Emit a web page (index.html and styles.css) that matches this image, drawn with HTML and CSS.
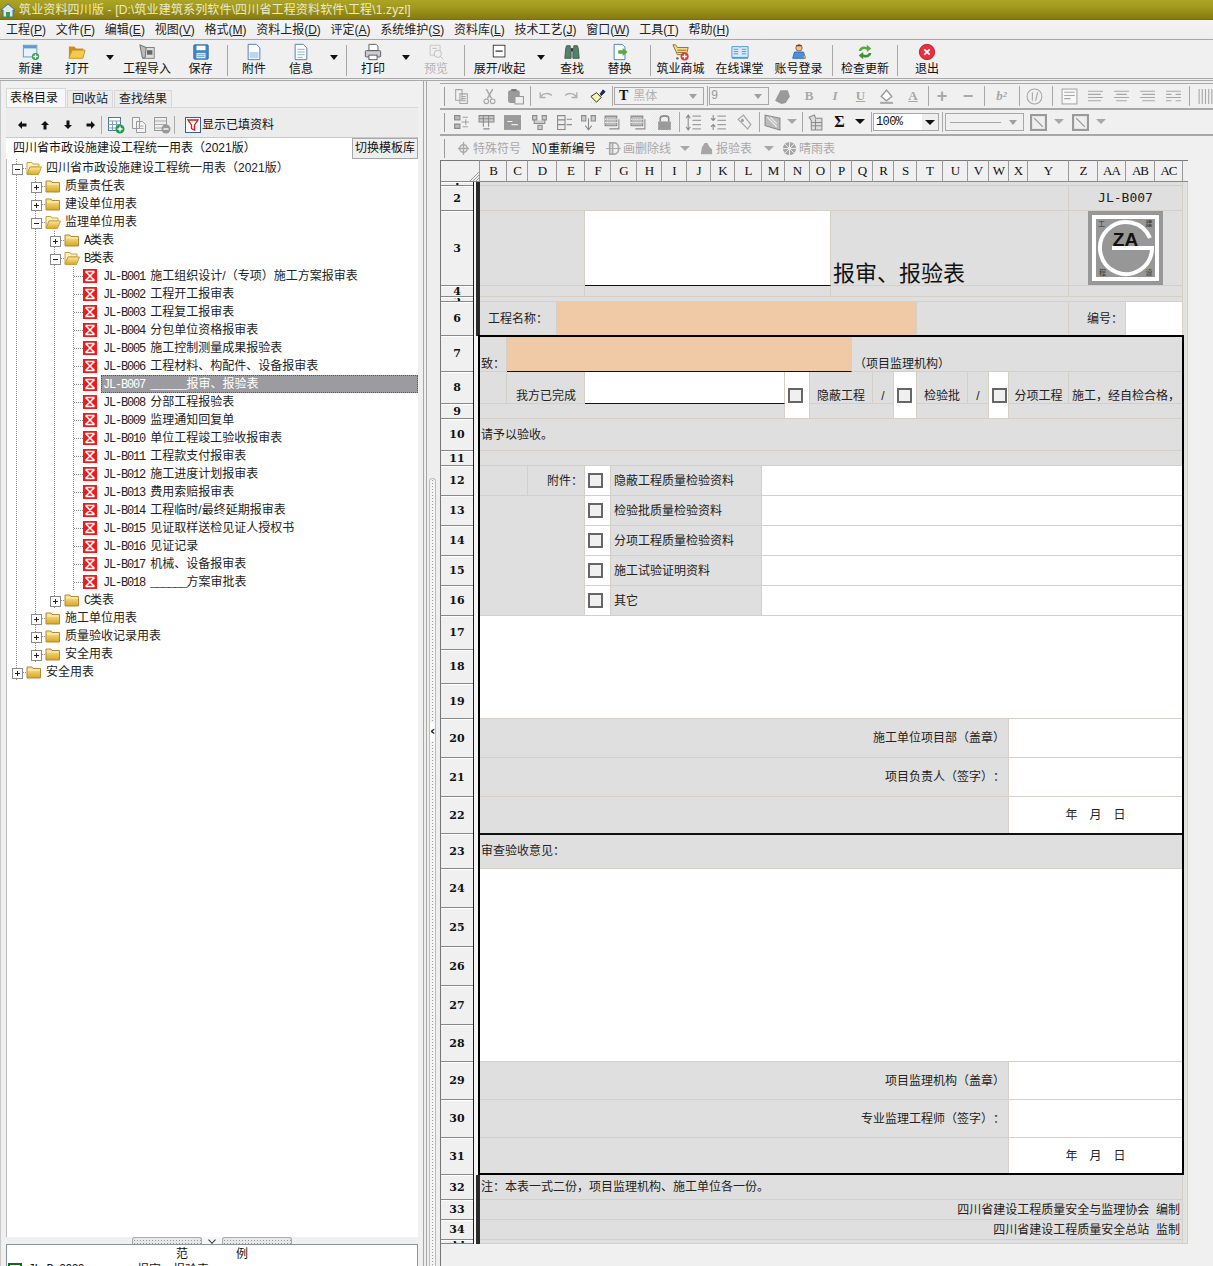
FILE: index.html
```html
<!DOCTYPE html>
<html lang="zh">
<head>
<meta charset="utf-8">
<title>筑业资料四川版</title>
<link rel="stylesheet" href="styles.css">
</head>
<body>
<svg class="defs" width="0" height="0">
<defs>
<linearGradient id="fy" x1="0" y1="0" x2="0" y2="1"><stop offset="0" stop-color="#fde9a0"/><stop offset="1" stop-color="#d9a520"/></linearGradient>
<symbol id="new" viewBox="0 0 20 20"><rect x="1.5" y="2.5" width="15" height="13" fill="#eaf3fb" stroke="#5b8fc7"/><rect x="2" y="3" width="14" height="3" fill="#5b9bd5"/><circle cx="15" cy="15" r="4" fill="#2f9e4f"/><path d="M15 12.5v5M12.5 15h5" stroke="#fff" stroke-width="1.4"/></symbol>
<symbol id="open" viewBox="0 0 20 20"><path d="M1 4h6l2 2h8v2H5L2 16H1z" fill="#c98f1e"/><path d="M4.5 8H19l-2.500 9H1z" fill="#f7c948" stroke="#c98f1e"/></symbol>
<symbol id="imp" viewBox="0 0 20 20"><rect x="6" y="5" width="12" height="12" fill="#ddd" stroke="#777"/><path d="M2 2l7 3-1 11-3 1z" fill="#bbb" stroke="#666"/><path d="M10 8h6v5h-6z" fill="#666"/></symbol>
<symbol id="save" viewBox="0 0 20 20"><rect x="2" y="2" width="16" height="16" rx="1" fill="#3f88c9" stroke="#2a6aa5"/><rect x="5" y="3" width="10" height="5" fill="#fff"/><rect x="5" y="11" width="10" height="6" fill="#d8ecf9"/><path d="M6 13h8M6 15h8" stroke="#6fa6d4"/></symbol>
<symbol id="att" viewBox="0 0 20 20"><path d="M3.500 1.500h9l4 4v13h-13z" fill="#fff" stroke="#3f78b8"/><path d="M5 10h10v7H5z" fill="#bcd6ef"/></symbol>
<symbol id="info" viewBox="0 0 20 20"><path d="M3.500 1.500h9l4 4v13h-13z" fill="#fff" stroke="#3f78b8"/><path d="M6 7h8M6 10h8M6 13h8M6 16h6" stroke="#7fa7d2"/></symbol>
<symbol id="print" viewBox="0 0 20 20"><path d="M5.500 1.500h8l2 2v5h-10z" fill="#fff" stroke="#555"/><rect x="1.500" y="8.500" width="17" height="7" rx="1" fill="#c9ccd2" stroke="#555"/><rect x="5.500" y="13.500" width="9" height="5" fill="#fff" stroke="#555"/></symbol>
<symbol id="prev" viewBox="0 0 20 20"><path d="M3.500 2.500h11v11h-11z" fill="none" stroke="#c4c4c4"/><circle cx="12" cy="12" r="4" fill="#f0f0f0" stroke="#bbb"/><path d="M15 15l3 3M6 6h5" stroke="#bbb"/></symbol>
<symbol id="fold" viewBox="0 0 20 20"><rect x="2.500" y="2.500" width="13" height="13" fill="#fff" stroke="#333"/><path d="M5 9h8" stroke="#222" stroke-width="1.300"/></symbol>
<symbol id="find" viewBox="0 0 20 20"><path d="M3 6l1-3h4v3h4V3h4l1 3 1 11h-7V9H9v8H2z" fill="#56806a" stroke="#3e5f4e"/><path d="M9 6h2v3H9z" fill="#333"/></symbol>
<symbol id="repl" viewBox="0 0 20 20"><path d="M3.500 1.500h9l3 3v14h-12z" fill="#fff" stroke="#3f78b8"/><path d="M8 8h5V5.500L18.500 10 13 14.500V12H8z" fill="#56a84a"/></symbol>
<symbol id="shop" viewBox="0 0 20 20"><path d="M1 2h3l2 3h12l-2 8H6z" fill="#f6d98a" stroke="#8a6a2a"/><path d="M6 8h10M6 10.500h9" stroke="#8a6a2a"/><circle cx="14" cy="15" r="4.500" fill="#e23b3b"/><path d="M14 12.500v5M11.500 15h5" stroke="#fff" stroke-width="1.400"/><circle cx="6" cy="17" r="1.300" fill="#555"/></symbol>
<symbol id="book" viewBox="0 0 20 20"><path d="M1 4h8.500l.5 1 .5-1H19v12H1z" fill="#d9ecfb" stroke="#4a90d0"/><path d="M3 7h5M3 9.500h5M3 12h5M12 7h5M12 9.500h5M12 12h5" stroke="#4a90d0"/><rect x="1" y="16" width="18" height="1.500" fill="#4a90d0"/></symbol>
<symbol id="user" viewBox="0 0 20 20"><circle cx="10" cy="5.500" r="3.500" fill="#f0c090" stroke="#8a5a30"/><path d="M6.500 3.500c1-2 6-2 7 0z" fill="#6a3d1d"/><path d="M5 10h10l2 7H3z" fill="#4a90e0" stroke="#2f6bb0"/><circle cx="16.500" cy="15.500" r="1.500" fill="#e8a04a"/></symbol>
<symbol id="upd" viewBox="0 0 20 20"><path d="M3 9c.5-4 5-6.500 9-4.500V2l5 4-5 4V7.500C9 6 6.500 7 6 9z" fill="#58a83e"/><path d="M17 11c-.5 4-5 6.500-9 4.500V18l-5-4 5-4v2.500c3 1.500 5.500.5 6-1.500z" fill="#3f8f2e"/></symbol>
<symbol id="exit" viewBox="0 0 20 20"><circle cx="10" cy="10" r="8.500" fill="#e8303f" stroke="#b02030"/><path d="M7 7l6 6M13 7l-6 6" stroke="#fff" stroke-width="2"/></symbol>
<symbol id="folder" viewBox="0 0 16 16"><path d="M1 3h5l1 1.500h7.500V14H1z" fill="url(#fy)" stroke="#b08a3a"/><path d="M2 6h12" stroke="#fff3c0"/></symbol>
<symbol id="folderopen" viewBox="0 0 16 16"><path d="M1 2.500h5l1 1.500h6v3H4l-3 7z" fill="#fdf2c0" stroke="#c9a040"/><path d="M4 7h11.500L12.500 14.500H1z" fill="url(#fy)" stroke="#c9a040"/></symbol>
<symbol id="form" viewBox="0 0 14 14"><rect width="14" height="14" fill="#f01a1a"/><path d="M2.500 2.500h9M2.500 2.500l9 9M11.500 2.500l-9 9M2.500 11.500h9" stroke="#fff" stroke-width="1.600"/></symbol>
<symbol id="addrow" viewBox="0 0 18 18"><rect x="1.500" y="1.500" width="12" height="13" fill="#fff" stroke="#4a7a9a"/><path d="M1.500 5h12M1.500 8.500h12M1.500 12h12M5.500 5v9.500M9.500 5v9.500" stroke="#7fa2ba"/><circle cx="13" cy="13" r="4.500" fill="#249a4a"/><path d="M13 10.500v5M10.500 13h5" stroke="#fff" stroke-width="1.400"/></symbol>
<symbol id="copyrow" viewBox="0 0 18 18"><path d="M2.500 1.500h7v11h-7zM6.500 5.500h6l3 3v8h-9z" fill="#f4f4f4" stroke="#999"/><path d="M8.500 10h5M8.500 12.500h5" stroke="#aaa"/></symbol>
<symbol id="delrow" viewBox="0 0 18 18"><rect x="1.500" y="1.500" width="12" height="13" fill="#eee" stroke="#999"/><path d="M1.500 5h12M1.500 8.500h12M1.500 12h12" stroke="#aaa"/><circle cx="13" cy="13" r="4.500" fill="#999"/><path d="M10.500 13h5" stroke="#fff" stroke-width="1.400"/></symbol>
<symbol id="filter" viewBox="0 0 16 16"><rect x=".5" y=".5" width="15" height="15" fill="#fff" stroke="#3a5f9a"/><path d="M3 3h10L9.500 8v5l-3-1.500V8z" fill="#fff" stroke="#e01515" stroke-width="1.300"/></symbol>
<symbol id="al" viewBox="0 0 10 10"><path d="M1 5l4-4v2.500h4.500v3H5V9z" fill="#111"/></symbol>
<symbol id="ar" viewBox="0 0 10 10"><path d="M9 5L5 1v2.500H.5v3H5V9z" fill="#111"/></symbol>
<symbol id="au" viewBox="0 0 10 10"><path d="M5 1L1 5h2.500v4.500h3V5H9z" fill="#111"/></symbol>
<symbol id="ad" viewBox="0 0 10 10"><path d="M5 9L1 5h2.500V.5h3V5H9z" fill="#111"/></symbol>
<symbol id="copy" viewBox="0 0 16 16"><path d="M2.500 1.500h6v10h-6zM6.500 5.500h7v9h-7z" fill="#f0f0f0" stroke="#a6a6a6"/><path d="M8 8h4M8 10h4M8 12h4" stroke="#a6a6a6"/></symbol>
<symbol id="cut" viewBox="0 0 16 16"><path d="M5 1l5 9M11 1l-5 9" stroke="#a6a6a6" stroke-width="1.300" fill="none"/><circle cx="5" cy="12.500" r="2.200" fill="none" stroke="#a6a6a6"/><circle cx="11" cy="12.500" r="2.200" fill="none" stroke="#a6a6a6"/></symbol>
<symbol id="paste" viewBox="0 0 16 16"><rect x="1" y="2" width="11" height="12" rx="2" fill="#9a9a9a"/><rect x="4" y="1" width="5" height="2" fill="#777"/><rect x="7.500" y="8" width="8" height="7" fill="#f0f0f0" stroke="#999"/></symbol>
<symbol id="undo" viewBox="0 0 16 16"><path d="M4 8c1-3 7-4 10-1M3 4v5h5" fill="none" stroke="#b0b0b0" stroke-width="1.300"/></symbol>
<symbol id="redo" viewBox="0 0 16 16"><path d="M12 8c-1-3-7-4-10-1M13 4v5H8" fill="none" stroke="#b0b0b0" stroke-width="1.300"/></symbol>
<symbol id="brush" viewBox="0 0 18 18"><path d="M2 9l6-4 5 5-5 5z" fill="#fff7b0" stroke="#222"/><path d="M12 6l3-4 2 2-4 4z" fill="#1f2f80" stroke="#111"/><path d="M2 15h1M5 16h1" stroke="#e6d800"/></symbol>
<symbol id="g1" viewBox="0 0 16 16"><path d="M1.500 1.500h5v4h-5zM1.500 9.500h5v4h-5z" fill="#bbb" stroke="#8a8a8a"/><path d="M8 7.500h7M12 5v5M9 3h5M9 12h5" stroke="#a0a0a0"/></symbol>
<symbol id="g2" viewBox="0 0 16 16"><path d="M1 1.500h14v6H1z" fill="#ccc" stroke="#8a8a8a"/><path d="M5 1v11M10 1v11M1 4.500h14M5 14h6" stroke="#8a8a8a"/></symbol>
<symbol id="g3" viewBox="0 0 16 16"><rect x="0" y="1" width="16" height="14" fill="#9a9a9a"/><path d="M3 7h5M7 10h6" stroke="#eee"/></symbol>
<symbol id="g4" viewBox="0 0 16 16"><path d="M1.500 1.500h4v4h-4zM10.500 1.500h4v4h-4zM6.500 10.500h4v4h-4zM3 6v3h10V6" fill="#ccc" stroke="#8a8a8a"/></symbol>
<symbol id="g5" viewBox="0 0 16 16"><path d="M1.500 1.500h7v13h-7z" fill="#eee" stroke="#8a8a8a"/><path d="M1.500 5.500h7M1.500 10h7M10 5h5M10 10h5" stroke="#8a8a8a"/></symbol>
<symbol id="g6" viewBox="0 0 16 16"><path d="M1.500 1.500h4v5h-4zM10.500 1.500h4v5h-4z" fill="#ccc" stroke="#8a8a8a"/><path d="M8 4v11M5 11l3 4 3-4" fill="none" stroke="#8a8a8a"/></symbol>
<symbol id="g7" viewBox="0 0 16 16"><path d="M1 2h11v9H1z" fill="#bbb" stroke="#8a8a8a"/><path d="M1 5h11M1 8h11" stroke="#fff" stroke-dasharray="1 1"/><path d="M14 5v9H5" fill="none" stroke="#8a8a8a"/></symbol>
<symbol id="lock" viewBox="0 0 16 16"><path d="M4 7V4c0-3 8-3 8 0v3" fill="none" stroke="#8a8a8a" stroke-width="1.500"/><rect x="2" y="7" width="12" height="8" fill="#9a9a9a"/></symbol>
<symbol id="ls1" viewBox="0 0 16 16"><path d="M7 2h8M7 6h8M7 10h8M7 14h8" stroke="#a0a0a0"/><path d="M3 1v14M1 4l2-3 2 3M1 12l2 3 2-3" fill="none" stroke="#8a8a8a"/></symbol>
<symbol id="ls2" viewBox="0 0 16 16"><path d="M7 2h8M7 6h8M7 10h8M7 14h8" stroke="#a0a0a0"/><path d="M3 1v5M3 10v5M1 4l2 2 2-2M1 12l2-2 2 2" fill="none" stroke="#8a8a8a"/></symbol>
<symbol id="tag" viewBox="0 0 16 16"><path d="M2 5l5-4 7 9-3 4z" fill="none" stroke="#a0a0a0"/><circle cx="6" cy="6" r="1.500" fill="#a0a0a0"/></symbol>
<symbol id="chk" viewBox="0 0 16 16"><path d="M1 1v10l14 4V4z" fill="#bbb" stroke="#8a8a8a"/><path d="M3 3l9 9M6 3l6 6" stroke="#eee"/></symbol>
<symbol id="sheet" viewBox="0 0 16 16"><path d="M2 3l5-2 1 3h6v11H4V6z" fill="#ddd" stroke="#8a8a8a"/><path d="M4 8h10M4 11h10M8 5v10" stroke="#8a8a8a"/></symbol>
<symbol id="bord" viewBox="0 0 16 16"><rect x="1" y="1" width="14" height="14" fill="#eee" stroke="#9a9a9a" stroke-width="2"/><path d="M4 4l8 8" stroke="#9a9a9a"/></symbol>
<symbol id="fill" viewBox="0 0 16 16"><path d="M3 8l5-6 5 6-5 4z" fill="#fff" stroke="#999" stroke-width="1.300"/><path d="M2 14h12" stroke="#aaa" stroke-width="2"/></symbol>
<symbol id="blob" viewBox="0 0 16 16"><path d="M1 12l5-10h7l2 6-4 6-4 1z" fill="#9a9a9a"/></symbol>
<symbol id="al1" viewBox="0 0 16 16"><rect x="1" y="1" width="14" height="14" fill="#f8f8f8" stroke="#a6a6a6"/><path d="M3 4h10M3 7h10M3 10h6" stroke="#a6a6a6"/></symbol>
<symbol id="al2" viewBox="0 0 16 16"><path d="M1 3h14M1 6h12M1 9h14M1 12h12" stroke="#a6a6a6"/></symbol>
<symbol id="al3" viewBox="0 0 16 16"><path d="M1 3h14M3 6h10M1 9h14M3 12h10" stroke="#a6a6a6"/></symbol>
<symbol id="al4" viewBox="0 0 16 16"><path d="M1 3h14M3 6h12M1 9h14M3 12h12" stroke="#a6a6a6"/></symbol>
<symbol id="al5" viewBox="0 0 16 16"><path d="M1 3h14M1 6h5M10 6h5M1 9h14M1 12h5M10 12h5" stroke="#a6a6a6"/></symbol>
<symbol id="vs" viewBox="0 0 16 16"><path d="M2 1v14M5 1v14M8 1v14M11 1v14M14 1v14" stroke="#a6a6a6"/></symbol>
<symbol id="frac" viewBox="0 0 16 16"><circle cx="8" cy="8" r="7" fill="none" stroke="#a6a6a6"/><path d="M6 4v8M9 12l2-8" stroke="#a6a6a6"/></symbol>
<symbol id="spec" viewBox="0 0 16 16"><path d="M8 1v14M2 8h12" stroke="#aaa" stroke-width="1.500"/><circle cx="8" cy="8" r="4" fill="none" stroke="#aaa" stroke-width="1.500"/></symbol>
<symbol id="strike" viewBox="0 0 16 16"><path d="M4 2h5c6 0 6 12 0 12H4zM7 2v12" fill="none" stroke="#aaa" stroke-width="1.800"/><path d="M0 8h16" stroke="#aaa"/></symbol>
<symbol id="bao" viewBox="0 0 16 16"><path d="M2 14l1-7 3-5h3l2 4 3 3v5z" fill="#a6a6a6"/></symbol>
<symbol id="wea" viewBox="0 0 16 16"><circle cx="8" cy="8" r="7" fill="#a6a6a6"/><path d="M1 8h14M8 1v14M3 3l10 10M13 3L3 13" stroke="#eee"/></symbol>
</defs>
</svg>
<div class="app">
<header class="titlebar"><svg class="ticon" viewBox="0 0 16 16"><path d="M1 8l7-6 7 6h-2v7H3V8z" fill="#dfe8f2" stroke="#3a6ea5"/><path d="M6 10h4v5H6z" fill="#3a9a4f"/></svg><span>筑业资料四川版 - [D:\筑业建筑系列软件\四川省工程资料软件\工程\1.zyzl]</span></header>
<nav class="menubar">
<span>工程(<u>P</u>)</span><span>文件(<u>F</u>)</span><span>编辑(<u>E</u>)</span><span>视图(<u>V</u>)</span><span>格式(<u>M</u>)</span><span>资料上报(<u>D</u>)</span><span>评定(<u>A</u>)</span><span>系统维护(<u>S</u>)</span><span>资料库(<u>L</u>)</span><span>技术工艺(<u>J</u>)</span><span>窗口(<u>W</u>)</span><span>工具(<u>T</u>)</span><span>帮助(<u>H</u>)</span>
</nav>
<div class="toolbar">
<div class="tb w47"><svg><use href="#new"/></svg><span>新建</span></div>
<div class="tb w46"><svg><use href="#open"/></svg><span>打开</span></div>
<div class="drop w20"></div>
<div class="tb w54"><svg><use href="#imp"/></svg><span>工程导入</span></div>
<div class="tb w53"><svg><use href="#save"/></svg><span>保存</span></div>
<div class="vsep"></div>
<div class="tb w52"><svg><use href="#att"/></svg><span>附件</span></div>
<div class="tb w42"><svg><use href="#info"/></svg><span>信息</span></div>
<div class="drop w24"></div>
<div class="vsep"></div>
<div class="tb w52"><svg><use href="#print"/></svg><span>打印</span></div>
<div class="drop w14"></div>
<div class="tb w46 off"><svg><use href="#prev"/></svg><span>预览</span></div>
<div class="vsep m5"></div>
<div class="tb w69"><svg><use href="#fold"/></svg><span>展开/收起</span></div>
<div class="drop w14"></div>
<div class="tb w48"><svg><use href="#find"/></svg><span>查找</span></div>
<div class="tb w47"><svg><use href="#repl"/></svg><span>替换</span></div>
<div class="vsep m7"></div>
<div class="tb w59"><svg><use href="#shop"/></svg><span>筑业商城</span></div>
<div class="tb w59"><svg><use href="#book"/></svg><span>在线课堂</span></div>
<div class="tb w59"><svg><use href="#user"/></svg><span>账号登录</span></div>
<div class="vsep m4"></div>
<div class="tb w64"><svg><use href="#upd"/></svg><span>检查更新</span></div>
<div class="vsep"></div>
<div class="tb w58"><svg><use href="#exit"/></svg><span>退出</span></div>
</div>
<div class="work">
<aside class="left">
<div class="tabs"><span class="tab on">表格目录</span><span class="tab">回收站</span><span class="tab">查找结果</span></div>
<div class="leftbar">
<span class="arrow"><svg><use href="#al"/></svg></span>
<span class="arrow"><svg><use href="#au"/></svg></span>
<span class="arrow"><svg><use href="#ad"/></svg></span>
<span class="arrow"><svg><use href="#ar"/></svg></span>
<i class="lsep"></i>
<svg class="li"><use href="#addrow"/></svg><svg class="li"><use href="#copyrow"/></svg><svg class="li"><use href="#delrow"/></svg>
<i class="lsep second"></i>
<svg class="lf"><use href="#filter"/></svg><span class="lt">显示已填资料</span>
</div>
<div class="combo"><span class="combotext">四川省市政设施建设工程统一用表（2021版）</span><span class="combobtn">切换模板库</span></div>
<div class="tree">
<div class="row"><i class="b m"></i><svg class="fo"><use href="#folderopen"/></svg><span class="l">四川省市政设施建设工程统一用表（2021版）</span></div>
<div class="row"><i class="g"></i><i class="b p"></i><svg class="fo"><use href="#folder"/></svg><span class="l">质量责任表</span></div>
<div class="row"><i class="g"></i><i class="b p"></i><svg class="fo"><use href="#folder"/></svg><span class="l">建设单位用表</span></div>
<div class="row"><i class="g"></i><i class="b m"></i><svg class="fo"><use href="#folderopen"/></svg><span class="l">监理单位用表</span></div>
<div class="row"><i class="g"></i><i class="g"></i><i class="b p"></i><svg class="fo"><use href="#folder"/></svg><span class="l"><b>A</b>类表</span></div>
<div class="row"><i class="g"></i><i class="g"></i><i class="b m"></i><svg class="fo"><use href="#folderopen"/></svg><span class="l"><b>B</b>类表</span></div>
<div class="row"><i class="g"></i><i class="g"></i><i class="g"></i><i class="e"></i><svg class="fm"><use href="#form"/></svg><span class="l f"><b>JL-B001</b> 施工组织设计/（专项）施工方案报审表</span></div>
<div class="row"><i class="g"></i><i class="g"></i><i class="g"></i><i class="e"></i><svg class="fm"><use href="#form"/></svg><span class="l f"><b>JL-B002</b> 工程开工报审表</span></div>
<div class="row"><i class="g"></i><i class="g"></i><i class="g"></i><i class="e"></i><svg class="fm"><use href="#form"/></svg><span class="l f"><b>JL-B003</b> 工程复工报审表</span></div>
<div class="row"><i class="g"></i><i class="g"></i><i class="g"></i><i class="e"></i><svg class="fm"><use href="#form"/></svg><span class="l f"><b>JL-B004</b> 分包单位资格报审表</span></div>
<div class="row"><i class="g"></i><i class="g"></i><i class="g"></i><i class="e"></i><svg class="fm"><use href="#form"/></svg><span class="l f"><b>JL-B005</b> 施工控制测量成果报验表</span></div>
<div class="row"><i class="g"></i><i class="g"></i><i class="g"></i><i class="e"></i><svg class="fm"><use href="#form"/></svg><span class="l f"><b>JL-B006</b> 工程材料、构配件、设备报审表</span></div>
<div class="row"><i class="g"></i><i class="g"></i><i class="g"></i><i class="e"></i><svg class="fm"><use href="#form"/></svg><span class="l f sel"><b>JL-B007</b> <b class="us">______</b>报审、报验表</span></div>
<div class="row"><i class="g"></i><i class="g"></i><i class="g"></i><i class="e"></i><svg class="fm"><use href="#form"/></svg><span class="l f"><b>JL-B008</b> 分部工程报验表</span></div>
<div class="row"><i class="g"></i><i class="g"></i><i class="g"></i><i class="e"></i><svg class="fm"><use href="#form"/></svg><span class="l f"><b>JL-B009</b> 监理通知回复单</span></div>
<div class="row"><i class="g"></i><i class="g"></i><i class="g"></i><i class="e"></i><svg class="fm"><use href="#form"/></svg><span class="l f"><b>JL-B010</b> 单位工程竣工验收报审表</span></div>
<div class="row"><i class="g"></i><i class="g"></i><i class="g"></i><i class="e"></i><svg class="fm"><use href="#form"/></svg><span class="l f"><b>JL-B011</b> 工程款支付报审表</span></div>
<div class="row"><i class="g"></i><i class="g"></i><i class="g"></i><i class="e"></i><svg class="fm"><use href="#form"/></svg><span class="l f"><b>JL-B012</b> 施工进度计划报审表</span></div>
<div class="row"><i class="g"></i><i class="g"></i><i class="g"></i><i class="e"></i><svg class="fm"><use href="#form"/></svg><span class="l f"><b>JL-B013</b> 费用索赔报审表</span></div>
<div class="row"><i class="g"></i><i class="g"></i><i class="g"></i><i class="e"></i><svg class="fm"><use href="#form"/></svg><span class="l f"><b>JL-B014</b> 工程临时/最终延期报审表</span></div>
<div class="row"><i class="g"></i><i class="g"></i><i class="g"></i><i class="e"></i><svg class="fm"><use href="#form"/></svg><span class="l f"><b>JL-B015</b> 见证取样送检见证人授权书</span></div>
<div class="row"><i class="g"></i><i class="g"></i><i class="g"></i><i class="e"></i><svg class="fm"><use href="#form"/></svg><span class="l f"><b>JL-B016</b> 见证记录</span></div>
<div class="row"><i class="g"></i><i class="g"></i><i class="g"></i><i class="e"></i><svg class="fm"><use href="#form"/></svg><span class="l f"><b>JL-B017</b> 机械、设备报审表</span></div>
<div class="row"><i class="g"></i><i class="g"></i><i class="g"></i><i class="e"></i><svg class="fm"><use href="#form"/></svg><span class="l f"><b>JL-B018</b> <b class="us">______</b>方案审批表</span></div>
<div class="row"><i class="g"></i><i class="g"></i><i class="b p"></i><svg class="fo"><use href="#folder"/></svg><span class="l"><b>C</b>类表</span></div>
<div class="row"><i class="g"></i><i class="b p"></i><svg class="fo"><use href="#folder"/></svg><span class="l">施工单位用表</span></div>
<div class="row"><i class="g"></i><i class="b p"></i><svg class="fo"><use href="#folder"/></svg><span class="l">质量验收记录用表</span></div>
<div class="row"><i class="g"></i><i class="b p"></i><svg class="fo"><use href="#folder"/></svg><span class="l">安全用表</span></div>
<div class="row"><i class="b p"></i><svg class="fo"><use href="#folder"/></svg><span class="l">安全用表</span></div>
</div>
<div class="grip"><i class="dots"></i><i class="chev"></i><i class="dots"></i></div>
<div class="sample">
<div class="samplehead"><span>范</span><span>例</span></div>
<div class="samplerow"><i class="sw"></i><b>JL-B-2023</b><span>报审、报验表</span></div>
</div>
</aside>
<div class="splitter"><div class="handle"><i class="hdots"></i><i class="harrow">‹</i><i class="hdots"></i></div></div>
<main class="right">
<div class="rbar">
<i class="hg"></i>
<span class="t w27"><svg><use href="#copy"/></svg></span><span class="t w28"><svg><use href="#cut"/></svg></span><span class="t w24"><svg><use href="#paste"/></svg></span><i class="rs w5"></i>
<span class="t w26"><svg><use href="#undo"/></svg></span><span class="t w26"><svg><use href="#redo"/></svg></span><span class="t w26"><svg><use href="#brush"/></svg></span><i class="rs w4"></i>
<div class="cb w90"><span class="ttt">T</span><span class="cbt">黑体</span><i class="cba"></i></div><i class="rs w5"></i>
<div class="cb w60"><span class="cbt cbn">9</span><i class="cba"></i></div>
<span class="t w27"><svg><use href="#blob"/></svg></span><span class="t w26 gb">B</span><span class="t w26 gb gi">I</span><span class="t w25 gb gu">U</span><span class="t w27"><svg><use href="#fill"/></svg></span><span class="t w26 gb gu">A</span><i class="rs w3"></i>
<span class="t w26 gp">+</span><span class="t w26 gp">−</span><i class="rs w6"></i>
<span class="t w29 gb gi">b²</span><i class="rs w5"></i>
<span class="t w26"><svg><use href="#frac"/></svg></span><i class="rs w9"></i>
<span class="t w26"><svg><use href="#al1"/></svg></span><span class="t w26"><svg><use href="#al2"/></svg></span><span class="t w26"><svg><use href="#al3"/></svg></span><span class="t w26"><svg><use href="#al4"/></svg></span><span class="t w26"><svg><use href="#al5"/></svg></span><i class="rs w6"></i>
<span class="t w26"><svg><use href="#vs"/></svg></span>
</div>
<div class="rbar">
<i class="hg"></i>
<span class="t w26"><svg><use href="#g1"/></svg></span><span class="t w25"><svg><use href="#g2"/></svg></span><span class="t w27"><svg><use href="#g3"/></svg></span><span class="t w26"><svg><use href="#g4"/></svg></span><span class="t w24"><svg><use href="#g5"/></svg></span><span class="t w24"><svg><use href="#g6"/></svg></span><span class="t w25"><svg><use href="#g7"/></svg></span><span class="t w26"><svg><use href="#g7"/></svg></span><span class="t w26 dith"><svg><use href="#lock"/></svg></span><i class="rs w3"></i>
<span class="t w26"><svg><use href="#ls1"/></svg></span><span class="t w25"><svg><use href="#ls2"/></svg></span><span class="t w26"><svg><use href="#tag"/></svg></span><i class="rs w3"></i>
<span class="t w24"><svg><use href="#chk"/></svg></span><i class="da w16"></i><i class="rs w3"></i>
<span class="t w24"><svg><use href="#sheet"/></svg></span><span class="t w25 sig">Σ</span><i class="da w16 blk"></i>
<i class="rs w5"></i>
<div class="cb w66"><span class="cbt cbz">100%</span><i class="cbk"></i></div><i class="rs w6"></i>
<div class="cb w79"><i class="ln"></i><i class="cba"></i></div>
<span class="t w28"><svg><use href="#bord"/></svg></span><i class="da w14"></i>
<span class="t w28"><svg><use href="#bord"/></svg></span><i class="da w14"></i>
</div>
<div class="rbar last">
<i class="hg"></i>
<span class="x off ml8"><svg><use href="#spec"/></svg>特殊符号</span>
<span class="x ml11"><b class="no">NO</b>重新编号</span>
<span class="x off ml10"><svg><use href="#strike"/></svg>画删除线</span><i class="da w14 ml7"></i>
<span class="x off ml7"><svg><use href="#bao"/></svg>报验表</span><i class="da w14 ml10"></i>
<span class="x off ml6"><svg><use href="#wea"/></svg>晴雨表</span>
</div>
<div class="sheet">
<table class="grid">
<colgroup><col class="c32"><col class="c7"><col class="c27"><col class="c21"><col class="c29"><col class="c28"><col class="c26"><col class="c26"><col class="c25"><col class="c25"><col class="c24"><col class="c24"><col class="c27"><col class="c23"><col class="c25"><col class="c21"><col class="c21"><col class="c21"><col class="c21"><col class="c23"><col class="c26"><col class="c25"><col class="c21"><col class="c20"><col class="c19"><col class="c41"><col class="c29"><col class="c28"><col class="c29"><col class="c28"><col class="c5"></colgroup>
<tr class="h22 head"><th colspan="2" class="corner"></th><th>B</th><th>C</th><th>D</th><th>E</th><th>F</th><th>G</th><th>H</th><th>I</th><th>J</th><th>K</th><th>L</th><th>M</th><th>N</th><th>O</th><th>P</th><th>Q</th><th>R</th><th>S</th><th>T</th><th>U</th><th>V</th><th>W</th><th>X</th><th>Y</th><th>Z</th><th>AA</th><th>AB</th><th>AC</th><th class="hend"></th></tr>
<tr class="h4"><th class="rn">1</th><td rowspan="6" class="gut"></td><td colspan="28"></td><td rowspan="35" class="ad"></td></tr>
<tr class="h25"><th class="rn">2</th><td colspan="24"></td><td colspan="4" class="code">JL-B007</td></tr>
<tr class="h75"><th class="rn">3</th><td colspan="4"></td><td colspan="10" class="wh ul"></td><td colspan="10" class="big">报审、报验表</td><td colspan="4" class="logo"><svg class="lg" viewBox="0 0 75 74"><rect width="75" height="74" fill="#979797"/><rect x="4" y="4" width="67" height="66" fill="#fff"/><rect x="8" y="8" width="59" height="58" fill="#979797"/><path d="M62 27A26 26 0 1 0 64 37H24" fill="none" stroke="#fff" stroke-width="4"/><text x="37.500" y="35" class="za">ZA</text><text x="13.500" y="15" class="cn">工</text><text x="61" y="15" class="cn">建</text><text x="14.500" y="64" class="cn">程</text><text x="61" y="64" class="cn">设</text></svg></td></tr>
<tr class="h11"><th class="rn">4</th><td colspan="4"></td><td colspan="10"></td><td colspan="10"></td><td colspan="4"></td></tr>
<tr class="h5"><th class="rn">5</th><td colspan="28"></td></tr>
<tr class="h34"><th class="rn">6</th><td colspan="3" class="name">工程名称：</td><td colspan="15" class="pe"></td><td colspan="6"></td><td colspan="2" class="no2">编号：</td><td colspan="2" class="wh"></td></tr>
<tr class="h36"><th class="rn">7</th><td rowspan="25" class="gut thin"></td><td class="bt n1">致：</td><td colspan="14" class="pe ul"></td><td colspan="13" class="bt pl">（项目监理机构）</td></tr>
<tr class="h32"><th class="rn">8</th><td></td><td colspan="3" class="bt ra">我方已完成</td><td colspan="8" class="wh ul"></td><td rowspan="2" class="wh ck"><i class="box2"></i></td><td colspan="3" class="bt ctr">隐蔽工程</td><td class="bt ctr">/</td><td rowspan="2" class="wh ck"><i class="box2"></i></td><td colspan="2" class="bt ctr">检验批</td><td class="bt ctr">/</td><td rowspan="2" class="wh ck"><i class="box2"></i></td><td colspan="2" class="bt ctr">分项工程</td><td colspan="4" class="bt">施工，经自检合格，</td></tr>
<tr class="h15"><th class="rn">9</th><td colspan="12"></td><td colspan="4"></td><td colspan="3"></td><td colspan="6"></td></tr>
<tr class="h32"><th class="rn">10</th><td colspan="28" class="n1">请予以验收。</td></tr>
<tr class="h15"><th class="rn">11</th><td colspan="28"></td></tr>
<tr class="h30"><th class="rn">12</th><td colspan="2"></td><td colspan="2" class="ra att">附件：</td><td class="wh ck"><i class="box2"></i></td><td colspan="6">隐蔽工程质量检验资料</td><td colspan="17" class="wh"></td></tr>
<tr class="h30"><th class="rn">13</th><td colspan="4" rowspan="4"></td><td class="wh ck"><i class="box2"></i></td><td colspan="6">检验批质量检验资料</td><td colspan="17" class="wh"></td></tr>
<tr class="h30"><th class="rn">14</th><td class="wh ck"><i class="box2"></i></td><td colspan="6">分项工程质量检验资料</td><td colspan="17" class="wh"></td></tr>
<tr class="h30"><th class="rn">15</th><td class="wh ck"><i class="box2"></i></td><td colspan="6">施工试验证明资料</td><td colspan="17" class="wh"></td></tr>
<tr class="h30"><th class="rn">16</th><td class="wh ck"><i class="box2"></i></td><td colspan="6">其它</td><td colspan="17" class="wh"></td></tr>
<tr class="h34"><th class="rn">17</th><td colspan="28" rowspan="3" class="wh"></td></tr>
<tr class="h34"><th class="rn">18</th></tr>
<tr class="h35"><th class="rn">19</th></tr>
<tr class="h39"><th class="rn">20</th><td colspan="22" class="ra sg">施工单位项目部（盖章）</td><td colspan="6" class="wh"></td></tr>
<tr class="h39"><th class="rn">21</th><td colspan="22" class="ra sg">项目负责人（签字）：</td><td colspan="6" class="wh"></td></tr>
<tr class="h37"><th class="rn">22</th><td colspan="22"></td><td colspan="6" class="wh ymd">年　月　日</td></tr>
<tr class="h35"><th class="rn">23</th><td colspan="28" class="n1">审查验收意见：</td></tr>
<tr class="h39"><th class="rn">24</th><td colspan="28" rowspan="5" class="wh"></td></tr>
<tr class="h39"><th class="rn">25</th></tr>
<tr class="h39"><th class="rn">26</th></tr>
<tr class="h39"><th class="rn">27</th></tr>
<tr class="h37"><th class="rn">28</th></tr>
<tr class="h38"><th class="rn">29</th><td colspan="22" class="ra sg">项目监理机构（盖章）</td><td colspan="6" class="wh"></td></tr>
<tr class="h38"><th class="rn">30</th><td colspan="22" class="ra sg">专业监理工程师（签字）：</td><td colspan="6" class="wh"></td></tr>
<tr class="h37"><th class="rn">31</th><td colspan="22"></td><td colspan="6" class="wh ymd">年　月　日</td></tr>
<tr class="h25"><th class="rn">32</th><td rowspan="4" class="gut"></td><td colspan="28" class="n1">注：本表一式二份，项目监理机构、施工单位各一份。</td></tr>
<tr class="h20"><th class="rn">33</th><td colspan="28" class="ra ft">四川省建设工程质量安全与监理协会&nbsp;&nbsp;编制</td></tr>
<tr class="h20"><th class="rn">34</th><td colspan="28" class="ra ft">四川省建设工程质量安全总站&nbsp;&nbsp;监制</td></tr>
<tr class="h4"><th class="rn">35</th><td colspan="28"></td></tr>
</table>
<div class="frame"><i class="rule"></i></div>
</div>
</main>
</div>
</div>
</body>
</html>
```
FILE: styles.css
```css
* { box-sizing: border-box; }
html, body { margin: 0; height: 100%; overflow: hidden; }
body { background: #f0f0f0; color: #111; font: 12px/14px "Liberation Sans", "Noto Sans CJK SC", sans-serif; text-spacing-trim: space-all; }
i { font-style: normal; display: block; }
.defs { position: absolute; }
.app { display: flex; flex-direction: column; height: 1266px; width: 1213px; overflow: hidden; }

.titlebar { height: 20px; display: flex; align-items: center; gap: 3px; background: linear-gradient(#aca425, #a39a20 35%, #857a0e); color: #ece9c8; font-size: 12px; letter-spacing: .15px; border-bottom: 1px solid #6e6a3a; white-space: nowrap; }
.ticon { width: 16px; height: 16px; }
.menubar { height: 20px; display: flex; gap: 9.75px; padding: 2px 0 0 6px; background: linear-gradient(#f4f4f4, #eeeeee); border-bottom: 1px solid #a8a8a8; white-space: nowrap; line-height: 16px; color: #222; }

.toolbar { height: 41px; flex: none; display: flex; padding: 3px 0 0 7px; border-bottom: 3px double #a8a8a8; background: #f0f0f0; }
.tb { flex: none; display: flex; flex-direction: column; align-items: center; height: 34px; white-space: nowrap; }
.tb svg { width: 18px; height: 18px; flex: none; }
.tb span { line-height: 15px; margin-top: 1px; color: #111; }
.tb.off span { color: #b4b4b4; }
.drop { flex: none; height: 28px; position: relative; }
.drop::after { content: ""; position: absolute; left: 50%; top: 12px; margin-left: -4px; border: 4px solid transparent; border-top: 5px solid #111; border-bottom: 0; }
.vsep { flex: none; width: 1px; height: 31px; margin: 2px 0 0; background: #a8a8a8; }
.vsep.m4 { margin-left: 4px; }
.vsep.m5 { margin-left: 5px; }
.vsep.m7 { margin-left: 7px; }
.w14 { width: 14px; } .w20 { width: 20px; } .w24 { width: 24px; } .w25 { width: 25px; } .w26 { width: 26px; } .w27 { width: 27px; } .w28 { width: 28px; } .w29 { width: 29px; }
.w42 { width: 42px; } .w46 { width: 46px; } .w47 { width: 47px; } .w48 { width: 48px; } .w52 { width: 52px; } .w53 { width: 53px; } .w54 { width: 54px; } .w58 { width: 58px; } .w59 { width: 59px; } .w60 { width: 60px; } .w64 { width: 64px; } .w69 { width: 69px; }
.w66 { width: 66px; } .w79 { width: 79px; } .w90 { width: 90px; } .w16 { width: 16px; }

.work { flex: 1; display: flex; min-height: 0; }
.left { width: 423px; flex: none; display: flex; flex-direction: column; padding: 7px 5px 0 5px; border-left: 1px solid #c8c8c8; }
.tabs { display: flex; height: 19px; flex: none; align-items: flex-end; }
.tab { height: 17px; line-height: 17px; padding: 0 4px; background: #ececec; border: 1px solid #d8d8d8; border-bottom: 0; margin-left: 1px; white-space: nowrap; color: #222; }
.tab.on { height: 19px; line-height: 18px; padding: 0 3px; margin-left: 0; background: #f8f8f8; color: #111; width: 60px; }
.leftbar { height: 30px; display: flex; align-items: center; background: #ececec; border-top: 1px solid #d8d8d8; padding: 5px 0 0 4px; flex: none; }
.arrow { width: 23px; height: 10px; display: flex; justify-content: center; flex: none; }
.arrow svg { width: 10px; height: 10px; }
.lsep { width: 1px; height: 18px; background: #aaa; margin: 0 5px 0 -1px; flex: none; }
.lsep.second { margin-left: -2px; }
.li { width: 18px; height: 18px; margin-right: 5px; flex: none; }
.lf { width: 16px; height: 16px; margin: 0 1px 0 5px; flex: none; }
.lt { white-space: nowrap; }
.combo { height: 22px; flex: none; display: flex; background: #fff; border-top: 1px solid #c8c8c8; }
.combotext { flex: 1; padding: 3px 0 0 7px; line-height: 15px; white-space: nowrap; }
.combobtn { width: 66px; background: #eeeeee; border: 1px solid #a8a8a8; text-align: center; line-height: 18px; white-space: nowrap; }
.tree { flex: 1; min-height: 0; background: #fff; border-left: 1px solid #bbb; overflow: hidden; }
.row { height: 18px; display: flex; align-items: center; white-space: nowrap; }
.g, .e, .b { width: 19px; height: 18px; flex: none; position: relative; background: repeating-linear-gradient(#8a8a8a 0 1px, transparent 1px 2px) 9px 0 / 1px 100% no-repeat; }
.e::after, .b::before { content: ""; position: absolute; left: 10px; top: 9px; width: 9px; height: 1px; background: repeating-linear-gradient(90deg, #8a8a8a 0 1px, transparent 1px 2px); }
.b::after { content: ""; position: absolute; left: 5px; top: 5px; width: 9px; height: 9px; background: #fff; border: 1px solid #8a8a8a; }
.b.p::after { background: linear-gradient(#222, #222) center / 5px 1px no-repeat, linear-gradient(#222, #222) center / 1px 5px no-repeat, #fff; }
.b.m::after { background: linear-gradient(#222, #222) center / 5px 1px no-repeat, #fff; }
.fo { width: 16px; height: 16px; flex: none; margin-right: 4px; }
.fm { width: 14px; height: 14px; flex: none; margin-right: 6px; }
.l { color: #222; }
.l b { font: 400 12px/14px "Liberation Mono", monospace; letter-spacing: -1.2px; }
.l.f b { margin-right: 2px; }
.l.f b.us { margin-right: 0; }
.sel { flex: 1; height: 18px; line-height: 17px; margin: 0 0 0 -2px; padding-left: 1px; background: #9c9ca0; color: #fff; border: 1px dotted #555; }
.grip { height: 7px; flex: none; display: flex; justify-content: center; background: #f0f0f0; }
.dots { width: 70px; height: 7px; background: radial-gradient(circle, #999 0 1px, transparent 1px) 0 1px / 3px 3px, #e8e8e8; border: 1px solid #aaa; border-bottom: 0; border-radius: 3px 3px 0 0; }
.chev { width: 20px; height: 7px; background: #f6f6f6; position: relative; }
.chev::after { content: ""; position: absolute; left: 7px; top: 0; width: 5px; height: 5px; border-right: 1px solid #222; border-bottom: 1px solid #222; transform: rotate(45deg) scale(.9); }
.sample { height: 22px; flex: none; background: #fff; border: 1px solid #8a94a0; border-bottom: 0; overflow: hidden; }
.samplehead { display: flex; justify-content: center; gap: 48px; height: 18px; line-height: 18px; }
.samplerow { display: flex; gap: 6px; align-items: flex-start; height: 14px; padding-left: 1px; }
.samplerow b { font: 400 12px/14px "Liberation Mono", monospace; letter-spacing: -1px; width: 103px; }
.sw { width: 14px; height: 14px; background: #fff; border: 2px solid #0a6e16; flex: none; }

.splitter { width: 17px; flex: none; display: flex; flex-direction: column; padding: 397px 4px 0 5px; border-left: 1px solid #a8a8a8; background: linear-gradient(90deg, #eeeeee 0 2px, #a8a8a8 2px 3px, #eeeeee 3px); }
.handle { flex: 1; display: flex; flex-direction: column; background: #f4f4f4; border: 1px solid #bbb; border-bottom: 0; border-radius: 4px 4px 0 0; }
.hdots { width: 100%; height: 244px; background: radial-gradient(circle, #999 0 1px, transparent 1px) 1px 0 / 3px 3px; }
.hdots + .harrow + .hdots { flex: 1; height: auto; }
.harrow { height: 18px; text-align: center; font: bold 13px/16px "DejaVu Sans", sans-serif; color: #111; background: #fff; }

.right { flex: 1; min-width: 0; display: flex; flex-direction: column; padding-top: 2px; background: #f0f0f0; }
.rbar { flex: none; height: 26px; display: flex; align-items: center; border-top: 1px solid #a8a8a8; border-bottom: 1px solid #a8a8a8; white-space: nowrap; overflow: hidden; color: #a6a6a6; }
.rbar.last { height: 25px; border-bottom: 0; padding-top: 1px; }
.hg { width: 4px; height: 19px; flex: none; border-left: 1px solid #999; margin-left: 4px; }
.t { flex: none; height: 22px; display: flex; align-items: center; justify-content: center; }
.t svg { width: 17px; height: 17px; }
.rs { flex: none; height: 20px; position: relative; }
.rs::after { content: ""; position: absolute; left: 50%; top: 0; width: 1px; height: 100%; background: #a8a8a8; }
.w3 { width: 3px; } .w4 { width: 4px; } .w5 { width: 5px; } .w6 { width: 6px; } .w9 { width: 9px; }
.gb { font: bold 13px/16px "Liberation Serif", serif; color: #a8a8a8; }
.gi { font-style: italic; }
.gu { text-decoration: underline; }
.gp { font: bold 18px/18px "Liberation Sans", sans-serif; color: #a8a8a8; }
.sig { font: bold 16px/16px "Liberation Serif", serif; color: #111; }
.dith { background: repeating-conic-gradient(#e8e8e8 0 25%, #f4f4f4 0 50%) 0 0 / 2px 2px; }
.cb { flex: none; height: 18px; display: flex; align-items: center; border: 1px solid #a8a8a8; background: #f0f0f0; overflow: hidden; }
.ttt { font: bold 14px/14px "Liberation Serif", serif; color: #111; margin: 0 5px 0 4px; }
.cbt { flex: 1; color: #b0b0b0; font-size: 12px; }
.cbn { padding-left: 1px; font-family: "Liberation Mono", monospace; color: #999; }
.cbz { color: #111; padding-left: 2px; background: #fff; height: 100%; line-height: 16px; font-family: "Liberation Mono", monospace; letter-spacing: -.6px; }
.cba { flex: none; width: 0; height: 0; margin: 0 6px 0 4px; border: 4px solid transparent; border-top: 5px solid #a0a0a0; border-bottom: 0; }
.cbk { flex: none; width: 16px; height: 100%; background: #eeeeee; position: relative; }
.cbk::after { content: ""; position: absolute; left: 3px; top: 6px; border: 5px solid transparent; border-top: 5px solid #111; border-bottom: 0; }
.ln { flex: 1; height: 1px; background: #a8a8a8; margin: 0 4px; }
.da { flex: none; height: 16px; position: relative; }
.da::after { content: ""; position: absolute; left: 50%; top: 5px; margin-left: -5px; border: 5px solid transparent; border-top: 5px solid #a8a8a8; border-bottom: 0; }
.da.blk::after { border-top-color: #111; }
.x { display: flex; align-items: center; font-size: 12px; line-height: 16px; color: #111; flex: none; }
.x.off { color: #a8a8a8; }
.x svg { width: 15px; height: 15px; margin-right: 2px; flex: none; }
.no { font: 400 17px/16px "Liberation Serif", serif; width: 16px; display: inline-block; transform: scaleX(.6); transform-origin: left; }
.ml6 { margin-left: 6px; } .ml7 { margin-left: 7px; } .ml8 { margin-left: 8px; } .ml10 { margin-left: 10px; } .ml11 { margin-left: 11px; }

.sheet { position: relative; flex: 1; border-left: 1px solid #777; }
.grid { table-layout: fixed; border-collapse: separate; border-spacing: 0; width: 747px; }
col.c32 { width: 32px; } col.c7 { width: 7px; } col.c5 { width: 5px; } col.c19 { width: 19px; } col.c20 { width: 20px; } col.c21 { width: 21px; } col.c23 { width: 23px; } col.c24 { width: 24px; } col.c25 { width: 25px; } col.c26 { width: 26px; } col.c27 { width: 27px; } col.c28 { width: 28px; } col.c29 { width: 29px; } col.c41 { width: 41px; }
.h4 { height: 4px; } .h5 { height: 5px; } .h11 { height: 11px; } .h15 { height: 15px; } .h20 { height: 20px; } .h22 { height: 22px; } .h25 { height: 25px; } .h30 { height: 30px; } .h32 { height: 32px; } .h34 { height: 34px; } .h35 { height: 35px; } .h36 { height: 36px; } .h37 { height: 37px; } .h38 { height: 38px; } .h39 { height: 39px; } .h75 { height: 75px; }
.grid td { padding: 0 0 0 3px; line-height: 0; font-size: 12px; background: #dfdfdf; border-right: 1px solid #d4d0c8; border-bottom: 1px solid #d4d0c8; color: #222; overflow: hidden; white-space: nowrap; }
.head th { font: 400 13px/14px "Liberation Serif", serif; letter-spacing: -1px; background: #f0f0f0; border-right: 1px solid #999; border-bottom: 1px solid #888; border-top: 1px solid #777; padding: 0; color: #111; }
.head th.corner { background: linear-gradient(135deg, transparent 84%, #999 84% 86%, transparent 86% 89%, #999 89% 91%, transparent 91% 94%, #999 94% 96%, transparent 96%), #f0f0f0; }
.head th.hend { border-right: 0; }
.grid .rn { font: bold 11px/0 "DejaVu Serif", serif; padding: 0; background: #f0f0f0; border-bottom: 1px solid #888; border-top: 1px solid #fff; overflow: hidden; color: #111; }
.grid td.gut { padding: 0; background: linear-gradient(90deg, #1d1d1d 0 1px, #f4f4f4 1px 3px, #2a2a2a 3px); border: 0; }
.grid td.gut.thin { background: linear-gradient(90deg, #1d1d1d 0 1px, #f4f4f4 1px 5px, #111 5px); }
.grid td.ad { padding: 0; background: #e2e2de; }
.grid td.wh { background: #fff; }
.grid td.pe { background: #f0c9a6; }
.grid td.ul { border-bottom: 1px solid #111; }
.grid td.bt { vertical-align: bottom; line-height: 14px; }
.grid td.n1 { padding-left: 1px; }
.grid td.pl { padding-left: 2px; }
.grid td.ra { text-align: right; padding-right: 8px; }
.grid td.att { padding-right: 1px; }
.grid td.ctr { text-align: center; padding: 0; }
.grid td.big { vertical-align: bottom; font-size: 22px; line-height: 22px; padding: 0 0 0 2px; color: #111; }
.grid td.code { font: 13px/14px "DejaVu Sans Mono", monospace; text-align: center; color: #222; padding: 0; }
.grid td.logo { padding: 0 0 0 19px; }
.lg { display: block; width: 75px; height: 74px; }
.za { font: bold 19px "Liberation Sans", sans-serif; fill: #111; text-anchor: middle; }
.cn { font: 7px "Noto Sans CJK SC", sans-serif; fill: #333; text-anchor: middle; }
.grid td.name { padding-left: 8px; }
.grid td.no2 { padding-left: 18px; }
.grid td.ck { padding: 0 0 0 3px; }
.box2 { width: 15px; height: 15px; border: 2px solid #666; background: #f0f0f0; }
.grid td.sg { padding-right: 3px; }
.grid td.ymd { text-align: center; padding: 0; }
.grid td.ft { padding-right: 2px; }
.frame { position: absolute; left: 37px; top: 175px; width: 706px; height: 840px; border: 2px solid #000; pointer-events: none; }
.rule { position: absolute; left: 0; right: 0; top: 496px; height: 2px; background: #111; }
```
